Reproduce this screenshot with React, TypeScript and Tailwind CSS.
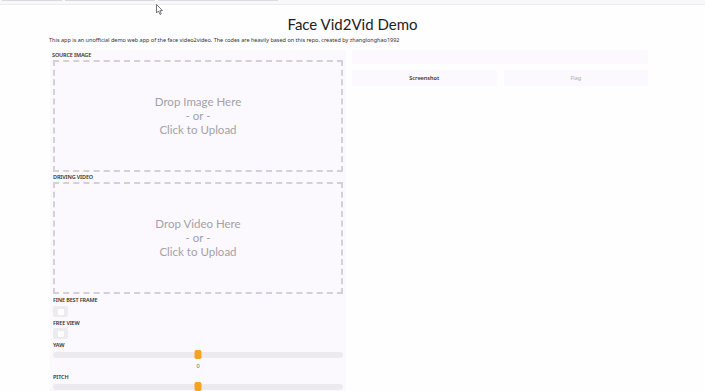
import { useState } from "react";

const Label = ({ text }: { text: string }) => (
    <div className="text-[5.5px] leading-[8px] font-semibold text-[#333] uppercase tracking-tight">{text}</div>
);

const DropZone = ({ kind }: { kind: string }) => (
    <div
        className="h-[112px] mx-[2px] border-[2px] border-dashed border-[#d4d0d8] flex flex-col items-center justify-center text-[11.5px] leading-[14px] text-[#a3a1a8]"
        style={{ fontFamily: 'Lato, "Noto Sans", sans-serif' }}
    >
        <span>Drop {kind} Here</span>
        <span>- or -</span>
        <span>Click to Upload</span>
    </div>
);

const Check = () => (
    <div className="w-[15px] h-[11px] rounded-[2px] bg-[#ececef] flex items-center justify-center">
        <div className="w-[6px] h-[6px] bg-white rounded-[1px]" />
    </div>
);

const Slider = ({ value }: { value: number }) => (
    <div className="relative h-[9px] flex items-center mx-[2px]">
        <div className="w-full h-[6px] rounded-full bg-[#eceaef]" />
        <div className="absolute top-0 w-[7px] h-[9px] rounded-[2px] bg-[#f2a31f]" style={{ left: `${((value + 90) / 180) * 100}%`, transform: "translateX(-50%)" }} />
    </div>
);

const App = () => {
    const [yaw] = useState(0);
    const [pitch] = useState(0);

    return (
        <div className="relative w-[705px] h-[391px] overflow-hidden bg-[#fefdff]" style={{ fontFamily: '"Noto Sans", "Open Sans", sans-serif' }}>
            <div className="h-[5px] border-b border-[#ececf0] bg-[#f8f8fa] flex items-start gap-[3px] pl-[2px]">
                <div className="w-[60px] h-[1px] bg-[#d8d8de]" />
                <div className="w-[90px] h-[1px] bg-[#d8d8de]" />
                <div className="w-[120px] h-[1px] bg-[#dcdce2]" />
            </div>
            <svg className="absolute left-[156px] top-[4px]" width="7" height="11" viewBox="0 0 7 11">
                <path d="M0.5 0.5 L0.5 9 L2.5 7 L4 10.5 L5.3 9.9 L3.9 6.6 L6.5 6.6 Z" fill="white" stroke="#555" strokeWidth="0.8" />
            </svg>

            <h1 className="text-center text-[15px] leading-[20px] text-[#222] mt-[9px]" style={{ fontFamily: 'Lato, "Noto Sans", sans-serif' }}>Face Vid2Vid Demo</h1>
            <p className="text-[5.5px] leading-[8px] text-[#333] pl-[49px] mt-[2px]">
                This app is an unofficial demo web app of the face video2video. The codes are heavily based on this repo, created by zhanglonghao1992
            </p>

            <div className="flex gap-[6px] pl-[50px] pr-[57px] mt-[6px]">
                <div className="w-[296px] bg-[#fbf9fd] px-[1px] pt-[1px] flex flex-col">
                    <div className="pl-[1px]"><Label text="Source Image" /></div>
                    <div className="mt-[1px]"><DropZone kind="Image" /></div>
                    <div className="mt-[1px] pl-[2px]"><Label text="Driving Video" /></div>
                    <div className="mt-[1px]"><DropZone kind="Video" /></div>
                    <div className="mt-[2px] pl-[2px]"><Label text="Fine Best Frame" /></div>
                    <div className="mt-[2px] pl-[2px]"><Check /></div>
                    <div className="mt-[2px] pl-[2px]"><Label text="Free View" /></div>
                    <div className="mt-[1px] pl-[2px]"><Check /></div>
                    <div className="mt-[2px] pl-[2px]"><Label text="Yaw" /></div>
                    <div className="mt-[1px]"><Slider value={yaw} /></div>
                    <div className="text-center text-[5.5px] leading-[8px] text-[#555] mt-[3px]">{yaw}</div>
                    <div className="mt-[3px] pl-[2px]"><Label text="Pitch" /></div>
                    <div className="mt-[1px]"><Slider value={pitch} /></div>
                </div>
                <div className="flex-1 flex flex-col gap-[6px]">
                    <div className="h-[14px] bg-[#fbf9fd]" />
                    <div className="flex gap-[7px]">
                        <button className="flex-1 h-[16px] bg-[#fbf9fd] text-[5.5px] font-semibold text-[#333]">Screenshot</button>
                        <button className="flex-1 h-[16px] bg-[#fbf9fd] text-[5.5px] text-[#aaa]">Flag</button>
                    </div>
                </div>
            </div>
        </div>
    );
};

export default App;
